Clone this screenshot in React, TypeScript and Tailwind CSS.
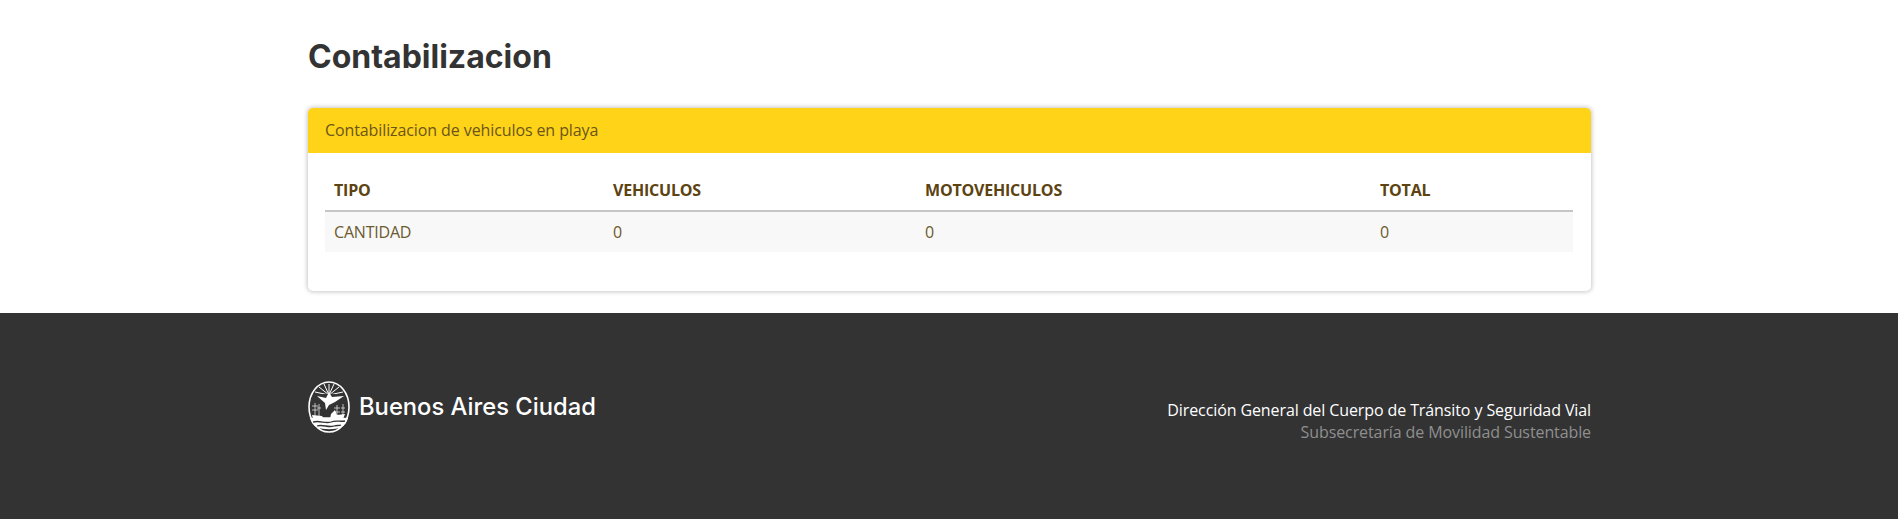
const openSans = { fontFamily: '"Open Sans", sans-serif' };

function CityLogo() {
    return (
        <svg width="42" height="52" viewBox="0 0 42 52" className="shrink-0">
            <ellipse cx="21" cy="26" rx="20" ry="25" fill="#333" stroke="#fff" strokeWidth="1.6" />
            {/* sun rays */}
            <path d="M21 14 L21 3 M21 14 L16 3 M21 14 L26 3 M21 14 L11 6 M21 14 L31 6 M21 14 L7 11 M21 14 L35 11" stroke="#fff" strokeWidth="1" />
            <path d="M7 15 C14 12 28 12 36 15 L30 18 L12 18 Z" fill="#333" />
            {/* bird */}
            <path d="M9 15 L18 17 L21 11 L24 16 L36 15 L27 21 L21 24 L18 29 L17 22 Z" fill="#fff" />
            {/* ships */}
            <path d="M7 22 V36 M4 25 H10 M4 29 H10 M11 23 V36 M9 27 H13 M29 24 V36 M26 27 H32 M26 31 H32 M35 23 V36 M33 27 H37 M33 31 H37" stroke="#fff" strokeWidth="0.8" opacity="0.85" />
            <path d="M4 34 L14 35 L16 38 L5 38 Z M23 33 L27 29 L29 34 L37 33 L35 38 L22 38 Z" fill="#fff" />
            {/* water */}
            <path d="M2 37 C12 36 28 36 40 37 C39 41 37 44 34 46 C26 49 16 49 8 46 C5 44 3 41 2 37 Z" fill="#fff" />
            <path d="M5 41 C12 39 17 43 23 41 C28 39 32 41 37 40 M9 45 C15 43 20 47 26 45 C29 44 31 45 33 44" stroke="#333" strokeWidth="1.3" fill="none" />
        </svg>
    );
}

export default function App() {
    return (
        <div className="w-full h-[519px] flex flex-col bg-white overflow-hidden" style={openSans}>
            <main className="h-[313px] shrink-0 pl-[308px] pr-[307px]">
                <h1 className="pt-[36px] h-[108px] text-[32px] leading-[42px] font-bold text-[#333333]" style={{ fontFamily: '"Inter", sans-serif' }}>
                    Contabilizacion
                </h1>
                <div className="h-[183px] rounded-[5px] bg-white shadow-[0_0_4px_1px_rgba(0,0,0,0.22)] overflow-hidden">
                    <div className="h-[45px] bg-[#ffd318] pl-[17px] pb-[2px] flex items-center text-[16px] tracking-[-0.1px] text-[#6b5518]">
                        Contabilizacion de vehiculos en playa
                    </div>
                    <div className="pl-[17px] pr-[18px] pt-[17px]">
                        <table className="w-full table-fixed border-collapse text-[16px] tracking-[-0.2px] text-[#5c4311]">
                            <thead>
                                <tr className="h-[41px] border-b-2 border-[#c6c6c6] text-left">
                                    <th className="w-[279px] pl-[9px] font-bold">TIPO</th>
                                    <th className="w-[312px] pl-[9px] font-bold">VEHICULOS</th>
                                    <th className="w-[455px] pl-[9px] font-bold">MOTOVEHICULOS</th>
                                    <th className="pl-[9px] font-bold">TOTAL</th>
                                </tr>
                            </thead>
                            <tbody>
                                <tr className="h-[41px] bg-[#f8f8f8] text-[#6b5a2e]">
                                    <td className="pl-[9px]">CANTIDAD</td>
                                    <td className="pl-[9px]">0</td>
                                    <td className="pl-[9px]">0</td>
                                    <td className="pl-[9px]">0</td>
                                </tr>
                            </tbody>
                        </table>
                    </div>
                </div>
            </main>
            <footer className="flex-1 bg-[#333333] pl-[308px] pr-[307px] pt-[68px] flex justify-between items-start">
                <div className="flex items-center gap-[9px]">
                    <CityLogo />
                    <span className="text-[23.75px] leading-[32px] font-medium text-white" style={{ fontFamily: '"Inter", sans-serif' }}>
                        Buenos Aires Ciudad
                    </span>
                </div>
                <div className="pt-[18px] text-right text-[16px] leading-[22px] tracking-[-0.1px]">
                    <div className="text-white">Dirección General del Cuerpo de Tránsito y Seguridad Vial</div>
                    <div className="text-[#8f8f8f]">Subsecretaría de Movilidad Sustentable</div>
                </div>
            </footer>
        </div>
    );
}
